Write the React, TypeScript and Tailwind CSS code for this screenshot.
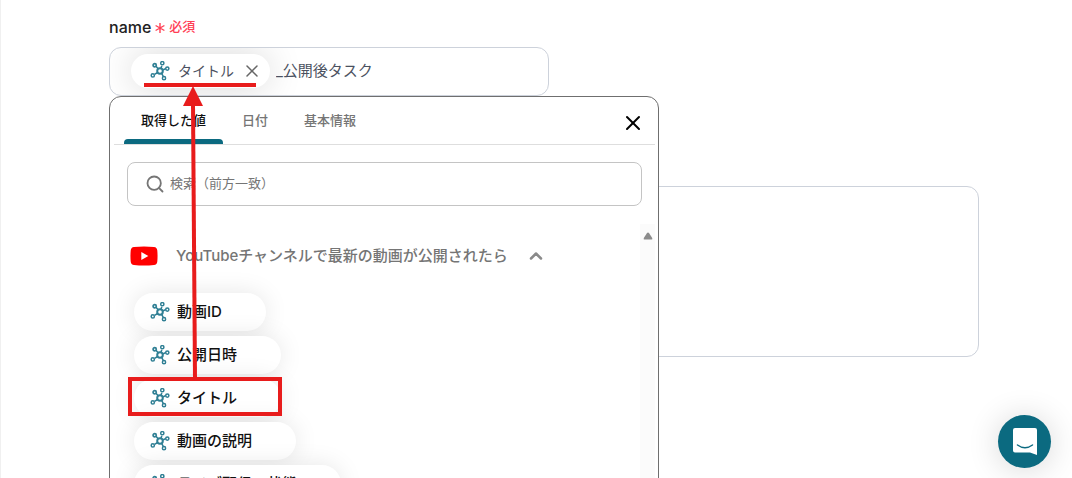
import React from "react"
import { ChevronUp, Search, X } from "lucide-react"

const tabs = ["取得した値", "日付", "基本情報"]
const values = ["動画ID", "公開日時", "タイトル", "動画の説明", "ライブ配信の状態"]

function NodeIcon() {
    return (
        <svg viewBox="0 0 20 20" className="h-5 w-5 shrink-0" fill="none" stroke="#2f7f94" strokeWidth="1.5" aria-hidden="true">
            <path d="M8.2 7.8 5.9 5.2M11 7.3l.8-2.5M12.6 9l2.9-1.3M7.6 11.5l-3 1.8M11.6 12.4l1.8 3.2" />
            <circle cx="10" cy="10" r="2.8" strokeWidth="2" />
            <circle cx="4.7" cy="4.2" r="1.6" strokeWidth="1.7" />
            <circle cx="12.3" cy="2.2" r="1.6" />
            <circle cx="17.3" cy="7.6" r="1.6" />
            <circle cx="2.8" cy="14.4" r="1.6" />
            <circle cx="14" cy="17.2" r="1.6" />
        </svg>
    )
}

function YouTubeIcon() {
    return (
        <svg viewBox="0 0 28 20" className="h-5 w-7 shrink-0" aria-hidden="true">
            <path d="M4 .9Q14-.1 24 .9 27 1.2 27.3 4.5 27.8 10 27.3 15.5 27 18.8 24 19.1 14 20.1 4 19.1 1 18.8.7 15.5.2 10 .7 4.5 1 1.2 4 .9Z" fill="#f00" />
            <path d="M11.3 6v8l7-4z" fill="#fff" />
        </svg>
    )
}

function NameField() {
    return (
        <div>
            <label htmlFor="name" className="flex h-6 items-center gap-1 text-base font-medium text-[#222]">
                name
                <span className="flex items-center gap-1 text-[13px] font-medium text-[#ff4055]">
                    <svg viewBox="0 0 10 10" className="mt-[2px] h-[10px] w-[10px]" stroke="currentColor" strokeWidth="1.4" aria-hidden="true">
                        <path d="M5 0v10M.6 2.5l8.8 5M9.4 2.5l-8.8 5" />
                    </svg>
                    必須
                </span>
            </label>
            <div className="mt-2 flex h-[49px] w-[440px] items-center overflow-hidden rounded-xl border border-[#cdd2db] pb-px pl-[21px] text-[15px] text-[#4b5160]">
                <span className="flex h-[34px] shrink-0 items-center rounded-full bg-white pl-[19px] pr-2 shadow-[0_0_36px_rgba(0,0,0,0.16)]">
                    <NodeIcon />
                    <span className="ml-2 text-sm">タイトル</span>
                    <button type="button" aria-label="タイトルを削除" className="ml-2 text-[#666]">
                        <X size={20} strokeWidth={1.8} />
                    </button>
                </span>
                <input id="name" type="text" defaultValue="_公開後タスク" className="ml-[6px] min-w-0 flex-1 bg-transparent outline-none" />
            </div>
        </div>
    )
}

function ValuePicker() {
    const [active, setActive] = React.useState(0)

    return (
        <div className="absolute left-0 top-[81px] z-10 w-[550px] overflow-hidden rounded-xl border border-[#6f6f6f] bg-white pl-1 pr-[3px]">
            <div className="flex h-12 items-center border-b border-[#dedede] px-[10px]">
                <div role="tablist" className="flex h-full flex-1 gap-[2px]">
                    {tabs.map((tab, i) => (
                        <button
                            key={tab}
                            type="button"
                            role="tab"
                            aria-selected={i === active}
                            onClick={() => setActive(i)}
                            className={`relative h-full px-[17px] text-[13px] font-medium ${i === active ? "text-[#111]" : "text-[#757575]"}`}
                        >
                            {tab}
                            {i === active && <span className="absolute inset-x-0 bottom-0 h-[5px] rounded-t bg-[#0b6a80]" />}
                        </button>
                    ))}
                </div>
                <button type="button" aria-label="閉じる" className="mt-1 text-black">
                    <X size={24} strokeWidth={2} />
                </button>
            </div>

            <div className="px-[13px] pt-[17px]">
                <label className="flex h-11 items-center rounded-lg border border-[#c4c4c4] pl-[17px]">
                    <Search size={20} strokeWidth={2.2} className="text-[#757575]" />
                    <input
                        type="text"
                        aria-label="検索"
                        placeholder="検索（前方一致）"
                        className="ml-[5px] min-w-0 flex-1 text-[13px] text-[#333] outline-none placeholder:text-[#757575]"
                    />
                </label>
            </div>

            <div className="mt-[18px] flex h-[360px] overflow-hidden">
                <div className="flex-1 pl-4 pt-5">
                    <button type="button" className="flex h-6 items-center text-[15px] font-medium text-[#757575]">
                        <YouTubeIcon />
                        <span className="ml-[18px]">YouTubeチャンネルで最新の動画が公開されたら</span>
                        <ChevronUp size={20} strokeWidth={3} className="ml-[18px] text-[#8a8a8a]" />
                    </button>
                    <ul className="mt-[25px] flex flex-col items-start gap-[5px] pl-1">
                        {values.map((value) => (
                            <li key={value}>
                                <button
                                    type="button"
                                    className="flex h-[38px] items-center gap-[7px] rounded-full bg-white pl-4 pr-11 text-[15px] font-medium text-[#111] shadow-[0_0_24px_rgba(0,0,0,0.1)]"
                                >
                                    <NodeIcon />
                                    {value}
                                </button>
                            </li>
                        ))}
                    </ul>
                </div>
                <div className="flex w-[15px] justify-center bg-[#fbfbfb] pt-2">
                    <svg viewBox="0 0 10 8" className="h-2 w-[10px]" fill="#8b8b8b" aria-hidden="true">
                        <path d="M5 .5Q5.6.5 6 1l3.2 5Q9.8 7.5 8.6 7.5H1.4Q.2 7.5.8 6L4 1Q4.4.5 5 .5Z" />
                    </svg>
                </div>
            </div>
        </div>
    )
}

function Annotations() {
    return (
        <svg className="pointer-events-none absolute left-0 top-0 z-20 h-[478px] w-[300px]" viewBox="1 0 300 478" aria-hidden="true">
            <path d="M144 85h112" stroke="#e81c1c" strokeWidth="4" />
            <path d="M195 379 193 104" stroke="#e81c1c" strokeWidth="4" />
            <path d="m193 86 10 20h-20z" fill="#e81c1c" />
            <rect x="130" y="379" width="150" height="35" fill="none" stroke="#e81c1c" strokeWidth="4" />
        </svg>
    )
}

export default function App() {
    return (
        <main className="relative h-screen overflow-hidden border-l border-[#f0f0f0] bg-white font-['Inter','Noto_Sans_CJK_JP',sans-serif]">
            <div className="relative ml-[108px] mr-[93px] mt-[15px]">
                <NameField />
                <textarea aria-label="メモ" className="mt-[90px] block h-[171px] w-full resize-none rounded-xl border border-[#cdd2db] outline-none" />
                <ValuePicker />
            </div>

            <button
                type="button"
                aria-label="チャットを開く"
                className="absolute bottom-[10px] right-[21px] flex h-[53px] w-[53px] items-center justify-center rounded-full bg-[#0b6a80] shadow-[0_2px_32px_rgba(0,0,0,0.16)]"
            >
                <svg viewBox="0 0 24 27" className="h-[27px] w-6" aria-hidden="true">
                    <path d="M2 0h20a2 2 0 0 1 2 2v25l-7-2.5H2a2 2 0 0 1-2-2V2a2 2 0 0 1 2-2Z" fill="#fff" />
                    <path d="M4.5 17q7.5 5.5 15 0" fill="none" stroke="#0b6a80" strokeWidth="1.5" strokeLinecap="round" />
                </svg>
            </button>

            <Annotations />
        </main>
    )
}
